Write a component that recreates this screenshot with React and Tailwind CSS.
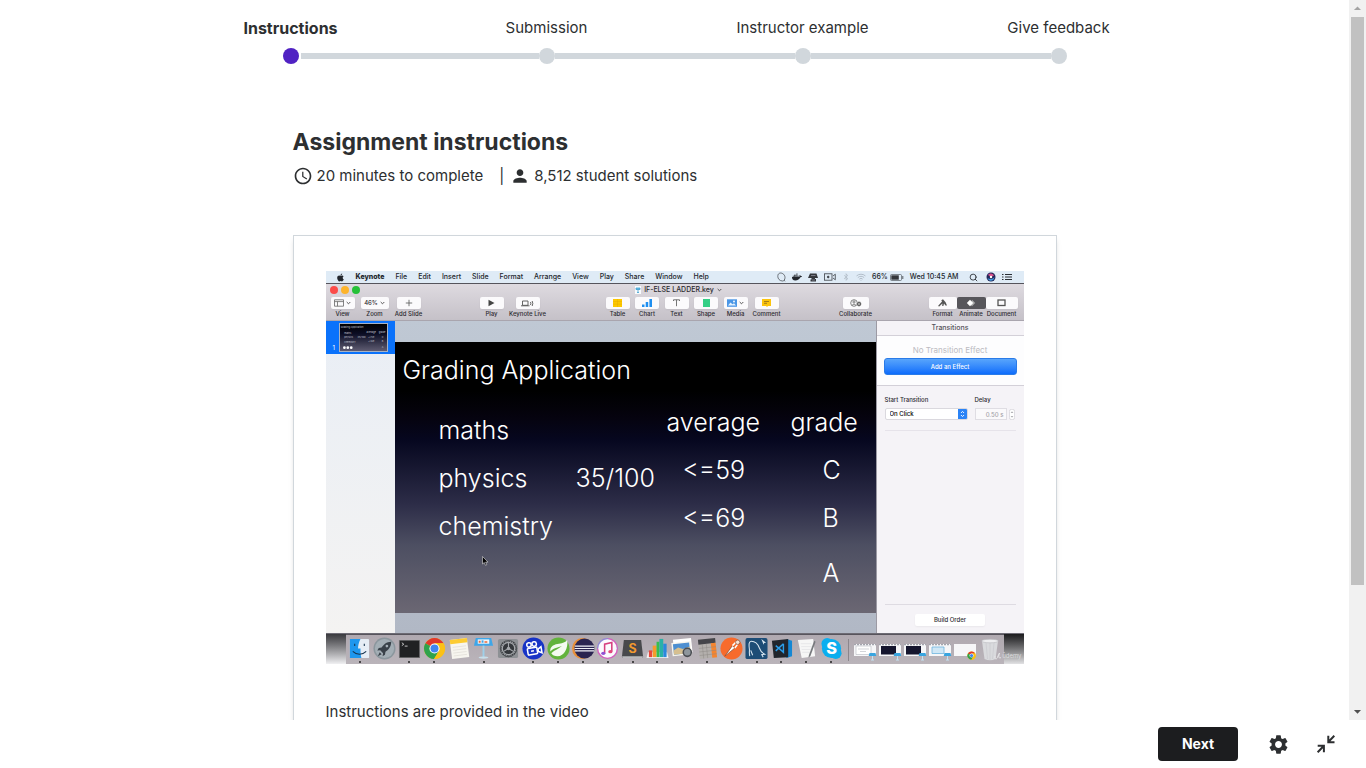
import React from "react";
import { MdAccessTime, MdPerson, MdSettings, MdArrowDropUp, MdArrowDropDown } from "react-icons/md";
import { FaApple, FaDocker, FaBluetoothB } from "react-icons/fa";
import { Search, Wifi } from "lucide-react";

const steps = ["Instructions", "Submission", "Instructor example", "Give feedback"];

function Stepper() {
  return (
    <ol className="mx-auto grid w-full max-w-[1024px] grid-cols-4 pt-4">
      {steps.map((label, i) => (
        <li key={label} className="flex flex-col items-center gap-2">
          <a
            href="#step"
            aria-current={i === 0 ? "step" : undefined}
            className={i === 0 ? "text-base leading-6 font-bold" : "leading-6"}
          >
            {label}
          </a>
          <div className="flex w-full items-center">
            <span className={i === 0 ? "h-1.5 flex-1" : "h-1.5 flex-1 bg-[#d1d7dc]"} />
            <span className={i === 0 ? "mr-0.5 ml-0.5 size-4 rounded-full bg-[#5022c3]" : "size-4 rounded-full bg-[#d1d7dc]"} />
            <span className={i === 3 ? "h-1.5 flex-1" : "h-1.5 flex-1 bg-[#d1d7dc]"} />
          </div>
        </li>
      ))}
    </ol>
  );
}

const menus = ["File", "Edit", "Insert", "Slide", "Format", "Arrange", "View", "Play", "Share", "Window", "Help"];

function MenuBar() {
  return (
    <div className="flex h-[13px] items-center justify-between border-b border-[#55545c] bg-[#dfebf6] pr-3 pl-2.5 text-[7px] leading-[12px] font-medium text-[#22262c]">
      <div className="flex items-center gap-[11px]">
        <FaApple size={9} />
        <span className="font-extrabold">Keynote</span>
        {menus.map((m) => (
          <span key={m}>{m}</span>
        ))}
      </div>
      <div className="flex items-center gap-1.5">
        <svg width="9" height="10" viewBox="0 0 9 10" fill="none" stroke="#3c4046">
          <path d="M2 1.500C4 0 8 2 8 5.500c0 2-1 3.500-2.500 3.500C2.500 9 .8 6.500.8 4.500.8 3 1.200 2 2 1.500z" strokeWidth=".7" />
          <path d="M7 8l1 1.300" strokeWidth=".7" />
        </svg>
        <FaDocker size={10} />
        <svg width="10" height="9" viewBox="0 0 10 9" fill="#34373c">
          <path d="M2 .5h6.500L10 5H7v1h1v2.500H2.500V6.500h1V5H0z" />
          <path d="M3 2.500h4.500M4 7h3" stroke="#aab" strokeWidth=".6" />
        </svg>
        <svg width="12" height="8" viewBox="0 0 12 8" fill="none" stroke="#3c4046" strokeWidth=".8">
          <rect x=".5" y=".8" width="7.500" height="6.400" />
          <path d="M9 3l2.300-1.800v5.600L9 5" />
          <circle cx="4.200" cy="4" r=".9" fill="#3c4046" />
        </svg>
        <FaBluetoothB size={8} color="#b3bec9" />
        <Wifi size={10} color="#aab5c1" strokeWidth={2} />
        <span className="flex items-center gap-0.5">
          66%
          <svg width="14" height="7" viewBox="0 0 14 7">
            <rect x=".5" y=".5" width="11" height="6" rx="1" fill="none" stroke="#555a62" strokeWidth=".7" />
            <rect x="1.300" y="1.300" width="7.500" height="4.400" fill="#33363b" />
            <path d="M12.800 2v3" stroke="#555a62" />
          </svg>
        </span>
        <span>Wed 10:45 AM</span>
        <Search size={9} strokeWidth={2.2} className="ml-1" />
        <svg width="10" height="10" viewBox="0 0 10 10" className="ml-0.5">
          <circle cx="5" cy="5" r="4.500" fill="#24285a" />
          <path d="M2 3c2-2.500 5-1.500 6 .5L5 5z" fill="#d5508b" />
          <path d="M1.500 6c2 1.500 5 1.500 7-1C8 8 6 9 4.500 8.800 3 8.500 2 7.500 1.500 6z" fill="#3f9be0" />
          <circle cx="5" cy="5" r="1.200" fill="#fff" />
        </svg>
        <svg width="10" height="8" viewBox="0 0 10 8" stroke="#2a2d33" strokeWidth="1">
          <path d="M0 1.500h1.500M3 1.500h7M0 4h1.500M3 4h7M0 6.500h1.500M3 6.500h7" />
        </svg>
      </div>
    </div>
  );
}

function Tool({ label, cell, btn, children, dark }) {
  return (
    <div className={"flex flex-col items-center " + cell}>
      <button
        aria-label={label}
        className={
          "flex h-3 shrink-0 items-center justify-center gap-0.5 rounded-[2px] text-[6px] leading-3 " +
          btn +
          (dark ? " bg-[#57565b]" : " bg-[#fbfafc] shadow-xs")
        }
      >
        {children}
      </button>
      <span className="text-[6px] leading-[10px] font-medium whitespace-nowrap">{label}</span>
    </div>
  );
}

const Chevron = () => (
  <svg width="5" height="4" viewBox="0 0 5 4" fill="none" stroke="#444" strokeWidth=".9">
    <path d="M.7 1l1.800 1.800L4.300 1" />
  </svg>
);

function ToolBar() {
  return (
    <div className="border-b border-[#a9a5ae] bg-linear-to-b from-[#dedae0] to-[#c5c1c8] text-[#2c2b30]">
      <div className="grid h-[13px] grid-cols-[1fr_auto_1fr] items-center pb-px pl-1">
        <div className="flex gap-[3px]">
          <span className="size-2 rounded-full bg-[#fb4b49]" />
          <span className="size-2 rounded-full bg-[#fdb42c]" />
          <span className="size-2 rounded-full bg-[#25c138]" />
        </div>
        <div className="flex items-center gap-[3px] pl-1 text-[7px] leading-3 font-medium">
          <svg width="6" height="8" viewBox="0 0 6 8">
            <rect width="6" height="8" fill="#f8fbfd" />
            <path d="M1 2h4v1.500H1zM3 3.500v3M2 6.500h2" stroke="#3d9fd0" strokeWidth=".8" fill="#6bc0e4" />
          </svg>
          IF-ELSE LADDER.key
          <Chevron />
        </div>
      </div>
      <div className="flex h-[23px] justify-between pr-1.5 pl-[3px]">
        <div className="flex">
          <Tool label="View" cell="w-7" btn="w-6">
            <svg width="10" height="8" viewBox="0 0 10 8" fill="none" stroke="#666" strokeWidth=".8">
              <path d="M.5.8h9v6.400h-9zM.5 2.600h9M3.500 2.600v4.600" />
            </svg>
            <Chevron />
          </Tool>
          <Tool label="Zoom" cell="w-9" btn="w-7">
            <span className="font-medium">46%</span>
            <Chevron />
          </Tool>
          <Tool label="Add Slide" cell="w-8" btn="w-6">
            <svg width="8" height="8" viewBox="0 0 8 8" stroke="#555" strokeWidth=".8">
              <path d="M4 .8v6.400M.8 4h6.400" />
            </svg>
          </Tool>
        </div>
        <div className="flex">
          <Tool label="Play" cell="w-7" btn="w-6">
            <svg width="7" height="8" viewBox="0 0 7 8" fill="#444">
              <path d="M.5.800L6.500 4 .5 7.200z" />
            </svg>
          </Tool>
          <Tool label="Keynote Live" cell="w-11" btn="w-6">
            <svg width="13" height="7" viewBox="0 0 13 7" fill="none" stroke="#555" strokeWidth=".9">
              <path d="M1.500 1h5.500v4.300H1.500zM0 5.800h8.500M9.500 2q.8 1.500 0 3M11.200 1q1.200 2.500 0 5" />
            </svg>
          </Tool>
        </div>
        <div className="flex">
          <Tool label="Table" cell="w-[30px]" btn="w-6">
            <svg width="9" height="8" viewBox="0 0 9 8">
              <rect width="9" height="8" fill="#fcc800" />
              <path d="M0 2.500h9M0 5.200h9M4.500 0v8" stroke="#e2a600" strokeWidth=".4" />
            </svg>
          </Tool>
          <Tool label="Chart" cell="w-[29px]" btn="w-6">
            <svg width="10" height="8" viewBox="0 0 10 8" fill="#1e8ff0">
              <path d="M0 5.500h2.500V8H0zM3.700 3h2.500v5H3.700zM7.400 0h2.600v8H7.400z" />
            </svg>
          </Tool>
          <Tool label="Text" cell="w-[30px]" btn="w-6">
            <svg width="7" height="8" viewBox="0 0 7 8" fill="none" stroke="#666" strokeWidth=".9">
              <path d="M.5 2V.8h6V2M3.500.800v6.400" />
            </svg>
          </Tool>
          <Tool label="Shape" cell="w-[29px]" btn="w-6">
            <span className="h-2 w-[7px] bg-[#35cf86]" />
          </Tool>
          <Tool label="Media" cell="w-[30px]" btn="w-6">
            <svg width="10" height="8" viewBox="0 0 10 8">
              <rect width="10" height="7.500" y=".3" fill="#4a96e6" />
              <path d="M1 6.500l2.500-3 2 1.800 1.500-1 2 2.200z" fill="#e4f1fd" />
              <circle cx="7" cy="2.500" r=".9" fill="#fff" />
            </svg>
            <Chevron />
          </Tool>
          <Tool label="Comment" cell="w-8" btn="w-6">
            <svg width="9" height="8" viewBox="0 0 9 8">
              <path d="M0 0h9v7H6L5 8 4 7H0z" fill="#fcc40c" />
              <path d="M2 2.500h5M2 4.300h3" stroke="#99761c" strokeWidth=".9" />
            </svg>
          </Tool>
        </div>
        <Tool label="Collaborate" cell="w-10" btn="w-[26px]">
          <svg width="12" height="8" viewBox="0 0 12 8" fill="none" stroke="#666" strokeWidth=".8">
            <circle cx="4" cy="4" r="3.300" />
            <circle cx="4" cy="3" r="1.100" />
            <path d="M2 6.300q2-2.600 4 0" />
            <circle cx="9" cy="5" r="2.400" fill="#444" stroke="#fff" strokeWidth=".5" />
            <path d="M9 3.800v2.400M7.800 5h2.400" stroke="#fff" strokeWidth=".6" />
          </svg>
        </Tool>
        <div className="flex">
          <Tool label="Format" cell="w-7" btn="w-7">
            <svg width="9" height="8" viewBox="0 0 9 8" fill="#555">
              <path d="M0 7l4-4.500L3.300 1.200 5 .2l2.600 3L9 6.500H7.500L6 4.500 5.400 7H4.200l.2-2.500L1.200 7.500z" />
            </svg>
          </Tool>
          <Tool label="Animate" cell="w-[29px]" btn="w-[29px]" dark>
            <svg width="10" height="8" viewBox="0 0 10 8">
              <path d="M6 .8L9.200 4 6 7.200 4.800 6z" fill="#aaa" />
              <path d="M4 .8L7.200 4 4 7.200.8 4z" fill="#fff" />
            </svg>
          </Tool>
          <Tool label="Document" cell="w-8" btn="w-8">
            <svg width="9" height="8" viewBox="0 0 9 8" fill="none" stroke="#555" strokeWidth="1.300">
              <rect x="1" y="1" width="7" height="5.500" />
            </svg>
          </Tool>
        </div>
      </div>
    </div>
  );
}

function SlideThumb() {
  return (
    <svg width="49" height="29" viewBox="0 0 481 271" preserveAspectRatio="none" className="border border-[#a8b3c4]">
      <defs>
        <linearGradient id="thumb" x1="0" y1="0" x2="0" y2="1">
          <stop offset="0" stopColor="#000" />
          <stop offset=".36" stopColor="#0b0d24" />
          <stop offset="1" stopColor="#5f5c72" />
        </linearGradient>
      </defs>
      <rect width="481" height="271" fill="url(#thumb)" />
      <g fill="#c3c6d4" fontFamily="Inter, sans-serif" fontSize="25">
        <text x="8" y="37">Grading Application</text>
        <text x="44" y="97">maths</text>
        <text x="44" y="145">physics</text>
        <text x="180" y="145">35/100</text>
        <text x="44" y="193">chemistry</text>
        <text x="272" y="89">average</text>
        <text x="396" y="89">grade</text>
        <text x="288" y="137">&lt;=59</text>
        <text x="288" y="185">&lt;=69</text>
        <text x="428" y="137">C</text>
        <text x="428" y="185">B</text>
        <text x="428" y="240">A</text>
      </g>
      <g fill="#fff">
        <circle cx="45" cy="238" r="14" />
        <circle cx="80" cy="238" r="14" />
        <circle cx="115" cy="238" r="14" />
      </g>
    </svg>
  );
}

function Slide() {
  return (
    <div className="relative h-[271px] bg-[linear-gradient(#000_18%,#05030f_28%,#06071f_36%,#2d2d48_60%,#4d4f62_75%,#6b6773_100%)] text-[25px] leading-8 font-light whitespace-nowrap text-white">
      <p className="absolute top-3 left-2">Grading Application</p>
      <p className="absolute top-[72px] left-11">maths</p>
      <p className="absolute top-[120px] left-11">physics</p>
      <p className="absolute top-[168px] left-11">chemistry</p>
      <p className="absolute top-[120px] left-[181px]">35/100</p>
      <p className="absolute top-[64px] left-[272px]">average</p>
      <p className="absolute top-[112px] left-[288px]">&lt;=59</p>
      <p className="absolute top-[160px] left-[288px]">&lt;=69</p>
      <p className="absolute top-[64px] left-[396px]">grade</p>
      <p className="absolute top-[112px] left-[428px]">C</p>
      <p className="absolute top-[160px] left-[428px]">B</p>
      <p className="absolute top-[215px] left-[428px]">A</p>
      <svg className="absolute top-[214px] left-[87px]" width="7" height="10" viewBox="0 0 7 10">
        <path d="M.5.5v7.500l1.800-1.500L3.500 9.300l1.300-.6-1.200-2.600H6z" fill="#000" stroke="#ddd" strokeWidth=".6" />
      </svg>
    </div>
  );
}

function Inspector() {
  return (
    <div className="flex w-[148px] flex-col border-l border-[#9c9aa4] bg-[#f5f3f7] text-[6px] font-medium text-[#2b2b30]">
      <p className="h-[15px] border-b border-[#d3d0d8] text-center text-[7px] leading-[14px] text-[#55545a]">Transitions</p>
      <div className="flex h-[50px] flex-col justify-end border-b border-[#d3d0d8] bg-[#fdfdfe] px-[7px] pb-[10px] text-center">
        <p className="text-[8px] leading-4 font-normal text-[#bcbbc1]">No Transition Effect</p>
        <button className="h-[17px] rounded-[3px] border border-[#2a7be8] bg-linear-to-b from-[#58a5fb] to-[#0c6cfb] text-[6px] leading-[15px] text-white">
          Add an Effect
        </button>
      </div>
      <div className="mx-2 grid grid-cols-[83px_auto] gap-x-[7px] border-b border-[#e6e3ea] pt-[9px] pb-[10px]">
        <label htmlFor="start" className="leading-[10px]">Start Transition</label>
        <label htmlFor="delay" className="leading-[10px]">Delay</label>
        <div className="mt-[3px] flex h-3 overflow-hidden rounded-[2px] border border-[#dad8de] bg-white">
          <select id="start" className="flex-1 appearance-none pl-1 text-[6px] leading-[10px] font-medium text-black">
            <option>On Click</option>
          </select>
          <span className="flex w-[9px] items-center justify-center bg-[#2b83f6]">
            <svg width="5" height="8" viewBox="0 0 5 8" fill="none" stroke="#fff" strokeWidth=".9">
              <path d="M1 3l1.500-1.600L4 3M1 5l1.500 1.600L4 5" />
            </svg>
          </span>
        </div>
        <div className="mt-[3px] flex items-center gap-0.5">
          <input
            id="delay"
            defaultValue="0.50 s"
            className="h-3 w-8 border border-[#dfdde3] bg-[#faf9fb] pr-0.5 text-right text-[6px] leading-[10px] text-[#a3a2a8]"
          />
          <svg width="6" height="11" viewBox="0 0 6 11" fill="none" stroke="#8d8c92" strokeWidth=".7">
            <rect x=".4" y=".4" width="5.200" height="10.200" rx="2" stroke="#cfcdd4" fill="#fff" />
            <path d="M2 4l1-1.200L4 4M2 7l1 1.200L4 7" />
          </svg>
        </div>
      </div>
      <div className="mx-2 mt-auto mb-[7px] flex justify-center border-t border-[#dedbe2] pt-[9px]">
        <button className="h-3 w-[70px] rounded-[2px] bg-white text-[6px] leading-3 shadow-xs">Build Order</button>
      </div>
    </div>
  );
}

const ChromeMark = () => (
  <>
    <circle cx="12" cy="12" r="11" fill="#fbc116" />
    <path d="M12 12L2.500 6.500A11 11 0 0 1 21.500 6.500H12z" fill="#e0382c" />
    <path d="M12 12L2.500 6.500A11 11 0 0 0 11.500 23l5-8.500z" fill="#2fa24c" />
    <path d="M12 6.500h9.500A11 11 0 0 1 11.500 23l5.200-8.500z" fill="#fbc116" />
    <circle cx="12" cy="12" r="5.300" fill="#fff" />
    <circle cx="12" cy="12" r="4.200" fill="#4285f0" />
  </>
);

const dockApps = [
  { name: "Finder", dot: true, art: (
    <>
      <rect x="2" y="2" width="20" height="20" rx="1" fill="#e6edf5" />
      <path d="M2 2h11c-2 4-2.500 7-2.500 10H13c0 4 .3 7 1 10H2z" fill="#1f97ee" />
      <path d="M7 7v2.500M17 7v2.500M5 15c4 4 10 4 14 0" fill="none" stroke="#16344f" strokeWidth="1.100" />
    </>) },
  { name: "Launchpad", art: (
    <>
      <circle cx="12" cy="12" r="11.500" fill="#8b969d" />
      <circle cx="12" cy="12" r="10" fill="#a3aeb5" />
      <path d="M19 5c-5 0-8 3-10 6l-3 .5L4.500 14l3-.3L10.500 17l-.5 3 2.500-1.500.5-3c3-2 6-5 6-10.500zM7 16l-2 4 4-2z" fill="#394149" />
      <circle cx="14.500" cy="9.500" r="1.400" fill="#a6b1b8" />
    </>) },
  { name: "Terminal", dot: true, art: (
    <>
      <rect x="1" y="3" width="22" height="19" rx="1" fill="#6b6b6d" />
      <rect x="2" y="4" width="20" height="17" fill="#202123" />
      <path d="M4 6l2 1.500L4 9M7 9.500h3" stroke="#ddd" fill="none" strokeWidth=".9" />
    </>) },
  { name: "Chrome", dot: true, art: <ChromeMark /> },
  { name: "Notes", art: (
    <g transform="rotate(-7 12 12)">
      <rect x="3" y="2" width="18" height="20" fill="#f7f5ef" />
      <rect x="3" y="2" width="18" height="4.500" fill="#fccb32" />
      <path d="M5 10h14M5 13h14M5 16h14M5 19h14" stroke="#dbd8d0" strokeWidth=".6" />
    </g>) },
  { name: "Keynote", dot: true, art: (
    <>
      <path d="M4 1h16l2 8H2z" fill="#3ea6e8" />
      <path d="M6 2.500h12v4.500H6z" fill="#f0f6fa" />
      <path d="M7 6V4h2v2M13 6V4.500h3V6" fill="#e96a3a" />
      <path d="M10 6V3.500h2V6" fill="#3ea6e8" />
      <path d="M11 9h2v12h-2z" fill="#9fd0ea" />
      <ellipse cx="12" cy="21.500" rx="5" ry="1.200" fill="#c8dfeb" />
    </>) },
  { name: "System Preferences", art: (
    <>
      <rect x="1" y="2" width="21" height="20" rx="2" fill="#8d9094" />
      <circle cx="12" cy="12" r="9" fill="#34373b" />
      <circle cx="12" cy="12" r="6.500" fill="none" stroke="#a6a9ad" strokeWidth="1.300" />
      <circle cx="12" cy="12" r="7.700" fill="none" stroke="#a6a9ad" strokeWidth="1.200" strokeDasharray="1 1" />
      <path d="M12 12V6M12 12l5.200 3M12 12l-5.200 3" stroke="#a6a9ad" strokeWidth="1.200" />
      <circle cx="12" cy="12" r="1.800" fill="#a6a9ad" />
    </>) },
  { name: "Camera", dot: true, art: (
    <>
      <circle cx="12" cy="12" r="11.500" fill="#1733c6" />
      <g transform="rotate(-10 12 12)" fill="none" stroke="#fff" strokeWidth="1.600">
        <circle cx="8" cy="7.500" r="2.300" />
        <circle cx="13.500" cy="7.500" r="2.300" />
        <rect x="5.500" y="11" width="10" height="7" rx="1" />
        <path d="M16.500 13.500l3.500-2v6.500l-3.500-2z" />
        <path d="M9 14.500h3" />
      </g>
    </>) },
  { name: "Spring", dot: true, art: (
    <>
      <circle cx="12" cy="12" r="11.500" fill="#62b33c" />
      <path d="M21 3c-2 3-6 3.500-10 4.200C6 8 3 10.500 3.500 15c3.500-3.500 8-4 12-5.500C12.500 12.500 8 13.500 4.500 17c1 2 3.500 3 6.500 3C18 20 22.500 11 21 3z" fill="#f4faf0" />
    </>) },
  { name: "Eclipse", dot: true, art: (
    <>
      <circle cx="11" cy="12" r="11" fill="#e8903a" />
      <circle cx="13" cy="12" r="10.500" fill="#2a2450" />
      <path d="M3 9.500h20M2.700 12h20.600M3 14.500h20" stroke="#f1f1f7" strokeWidth="1.200" />
    </>) },
  { name: "iTunes", dot: true, art: (
    <>
      <circle cx="12" cy="12" r="11" fill="#d35fbd" />
      <path d="M12 1a11 11 0 0 0-11 11h22" fill="#5ea9e8" opacity=".6" />
      <circle cx="12" cy="12" r="9.600" fill="#fbfafd" />
      <path d="M9 17V7.500l7.500-1.800V15" fill="none" stroke="#d6407f" strokeWidth="1.600" />
      <ellipse cx="7.600" cy="17" rx="2.200" ry="1.700" fill="#8e52d4" />
      <ellipse cx="15" cy="15.300" rx="2.200" ry="1.700" fill="#e2477c" />
    </>) },
  { name: "Sublime Text", dot: true, art: (
    <>
      <path d="M3 3h18l2 17-1 2H2l-1-2z" fill="#48494c" />
      <path d="M1 20h22l-1 2H2z" fill="#b9babd" />
      <text x="12" y="16.500" textAnchor="middle" fontSize="13" fontWeight="700" fill="#f29a2e" fontFamily="Inter, sans-serif">S</text>
    </>) },
  { name: "Numbers", dot: true, art: (
    <>
      <path d="M2 16h20l1.500 6H.5z" fill="#f1f1f3" />
      <path d="M3 14h3.500v7H3z" fill="#e8483d" />
      <path d="M7 9h4v12H7z" fill="#f59c2c" />
      <path d="M11 5h3v16h-3z" fill="#36bd4f" />
      <path d="M14 2h4v19h-4z" fill="#29b1a6" />
      <path d="M18 7h3.500v14H18z" fill="#2a88dd" />
    </>) },
  { name: "Preview", dot: true, art: (
    <>
      <g transform="rotate(-6 12 12)">
        <rect x="3" y="2" width="19" height="15" fill="#fff" />
        <rect x="1" y="5" width="20" height="14" fill="#f7f5ee" />
        <rect x="2.500" y="6.500" width="17" height="11" fill="#4d8fd1" />
        <path d="M2.500 13l5-2.500 5 2 7-1.500v6.500h-17z" fill="#d6bf90" />
      </g>
      <circle cx="17" cy="16" r="4.200" fill="#8e969c" stroke="#4a4d52" strokeWidth="1.600" />
    </>) },
  { name: "Calculator", dot: true, art: (
    <g transform="rotate(-6 12 12)">
      <rect x="3" y="2" width="18" height="20" fill="#b3afac" />
      <rect x="3" y="2" width="18" height="5" fill="#45454a" />
      <rect x="16" y="7" width="5" height="15" fill="#f5852f" />
      <path d="M3 11h18M3 14.700h18M3 18.400h18M7 7v15M11.200 7v15" stroke="#8d8985" strokeWidth=".5" />
    </g>) },
  { name: "Postman", dot: true, art: (
    <>
      <circle cx="12" cy="12" r="11.500" fill="#f76b2c" />
      <path d="M5 20l8-11 2.500 2.500z" fill="#fff" stroke="#7e4a32" strokeWidth=".7" />
      <path d="M13 9l4-4M15.500 11.500l3-4" stroke="#fff" strokeWidth="1.500" />
      <circle cx="18.500" cy="5.500" r="2.300" fill="#f7e3d8" stroke="#7e4a32" strokeWidth=".7" />
    </>) },
  { name: "MySQL Workbench", dot: true, art: (
    <>
      <rect x=".5" y="1" width="23" height="22" rx="2" fill="#1d4d76" />
      <path d="M5 20c-1-4 0-5-.5-8C4 8 4 4.500 6.500 4.500c4 0 7 3 8.500 7 1 3 2.500 5 5.500 6.500l-3 .5 1.500 2.500M6 14l2 5" fill="none" stroke="#d8e6f0" strokeWidth="1.100" />
      <path d="M17 2l5 4-2 .2-.5 2z" fill="#d8e6f0" />
    </>) },
  { name: "Visual Studio Code", dot: true, art: (
    <>
      <path d="M17 2l6 2v16l-6 2z" fill="#1487d4" />
      <path d="M2 4l17-2v19L4 22z" fill="#20252c" />
      <path d="M14 7v9l-6-5.500M14 7l-8 7.500M14 16L6 9" stroke="#2b9eea" strokeWidth="1.500" fill="none" />
    </>) },
  { name: "TextEdit", dot: true, art: (
    <>
      <path d="M3 3l16-1 2 18-14 2z" fill="#f6f6f6" />
      <path d="M6 7h11M6.500 10h11M7 13h10M7.500 16h8" stroke="#dcdcdf" strokeWidth=".6" />
      <path d="M20 4l1.500 1-5.500 15-2 1.500.5-2.500z" fill="#77797d" />
    </>) },
  { name: "Skype", dot: true, art: (
    <>
      <circle cx="12" cy="12" r="10" fill="#0aaeef" />
      <circle cx="7.500" cy="7" r="6" fill="#0aaeef" />
      <circle cx="16.500" cy="17" r="6" fill="#0aaeef" />
      <text x="12" y="18" textAnchor="middle" fontSize="17" fontWeight="800" fill="#fff" fontFamily="Inter, sans-serif">S</text>
    </>) },
];

const dockWindows = ["light", "dark", "dark", "blue", "chrome"];

function DockWindow({ kind }) {
  return (
    <svg width="23" height="22" viewBox="0 0 23 22">
      <rect x="0" y="5" width="22" height="12" fill="#f6f6f8" />
      {kind !== "chrome" && <path d="M0 5.700h22" stroke="#8f929c" strokeWidth="1" strokeDasharray="2 1" />}
      {kind === "dark" && <path d="M2 7h15v8.500H2z" fill="#15152e" />}
      {kind === "light" && <path d="M2 7h15v8.500H2zM4 10h11M6 12.500h6" fill="#fff" stroke="#b5b8bf" strokeWidth=".6" />}
      {kind === "blue" && <path d="M3 8h12v6.500H3z" fill="#cfe7f6" stroke="#6fb5de" strokeWidth=".8" />}
      {kind === "chrome" ? (
        <g transform="translate(13 12) scale(.38)">
          <ChromeMark />
        </g>
      ) : (
        <g>
          <path d="M15.500 14h6l.8 3h-7.600z" fill="#39a4df" />
          <path d="M18.500 17v4M17 21h3" stroke="#c3e2f2" strokeWidth="1" />
        </g>
      )}
    </svg>
  );
}

function Dock() {
  return (
    <div className="flex h-[30px]">
      <div className="w-5 bg-linear-to-b from-[#3a3a3e] to-[#f0f0f2]" />
      <div className="flex flex-1 items-center justify-between border-t border-[#57545c] bg-linear-to-b from-[#b0a9b0] to-[#bab4ba] pr-px pl-0.5">
        <div className="grid w-[496px] grid-cols-20">
          {dockApps.map((app) => (
            <div key={app.name} className="flex flex-col items-center gap-px">
              <svg width="23" height="23" viewBox="0 0 24 24" role="img" aria-label={app.name}>
                {app.art}
              </svg>
              <span className={app.dot ? "size-0.5 rounded-full bg-[#222]" : "size-0.5"} />
            </div>
          ))}
        </div>
        <span className="h-[22px] w-px bg-[#8b868c]" />
        <div className="grid w-[150px] grid-cols-6 items-center justify-items-center">
          {dockWindows.map((k, i) => (
            <DockWindow key={i} kind={k} />
          ))}
          <svg width="20" height="24" viewBox="0 0 20 24">
            <path d="M2 3l2.500 18q5.500 2.500 11 0L18 3z" fill="#d9dadd" />
            <path d="M6 5l1.500 16M10 5v17M14 5l-1.500 16" stroke="#cbccd0" strokeWidth=".8" />
            <ellipse cx="10" cy="3" rx="8.300" ry="1.800" fill="#eeeef0" stroke="#b8b9be" strokeWidth=".6" />
          </svg>
        </div>
      </div>
      <div className="relative w-5 bg-linear-to-b from-[#1c1c1e] to-[#e2e2e4]">
        <span className="absolute right-0.5 bottom-0.5 flex items-center text-[6px] leading-3 text-[#dcdcde]">
          <svg width="8" height="8" viewBox="0 0 8 8" fill="none" stroke="#e6e6e8" strokeWidth="1">
            <path d="M1 4c-.5 4 2 4 3 0l1.500-3C4 5 5 7 7 5.500" />
          </svg>
          ûdemy
        </span>
      </div>
    </div>
  );
}

function VideoFrame() {
  return (
    <figure className="w-full overflow-hidden font-[Inter,sans-serif]">
      <MenuBar />
      <ToolBar />
      <div className="flex h-[313px] border-b border-[#6d6b74]">
        <div className="w-[69px] bg-linear-to-b from-[#e9eef5] to-[#f4f3f2]">
          <div className="flex h-[33px] items-end justify-between bg-[#0a72fb] px-[7px] pb-0.5 text-[6px] leading-2 text-white">
            1
            <SlideThumb />
          </div>
        </div>
        <div className="flex min-w-0 flex-1 flex-col justify-center bg-linear-to-b from-[#bfc8d4] to-[#b1b8c5]">
          <Slide />
        </div>
        <Inspector />
      </div>
      <Dock />
    </figure>
  );
}

function ScrollTrack() {
  return (
    <div aria-hidden="true" className="flex w-[17px] shrink-0 flex-col items-center bg-[#f1f1f1]">
      <MdArrowDropUp size={17} color="#a3a3a3" />
      <div className="h-[568px] w-[13px] bg-[#c1c1c1]" />
      <MdArrowDropDown size={17} color="#505050" className="mt-auto" />
    </div>
  );
}

export default function App() {
  return (
    <div className="flex h-screen flex-col bg-white font-[Inter,sans-serif] text-[15px] text-[#2d2f31]">
      <div className="flex min-h-0 flex-1">
        <main className="min-w-0 flex-1 overflow-y-auto [scrollbar-width:none]">
          <Stepper />
          <section className="mx-auto w-full max-w-[764px] pt-[62px] pb-16">
            <h1 className="text-[23px] leading-8 font-bold">Assignment instructions</h1>
            <div className="mt-1.5 flex items-center leading-6">
              <MdAccessTime size={20} className="mr-1" />
              <span>20 minutes to complete</span>
              <span className="mr-1.5 ml-4">|</span>
              <MdPerson size={20} className="mr-1" />
              <span>8,512 student solutions</span>
            </div>
            <article className="mt-[47px] border border-[#d1d7dc] px-8 pt-[35px] pb-8 shadow-md">
              <VideoFrame />
              <p className="mt-9 leading-6">Instructions are provided in the video</p>
            </article>
          </section>
        </main>
        <ScrollTrack />
      </div>
      <footer className="flex h-12 shrink-0 items-center justify-end pr-4">
        <button className="mr-4 h-[34px] w-20 rounded bg-[#1c1d1f] text-sm font-bold text-white">Next</button>
        <button aria-label="Settings" className="flex size-12 items-center justify-center">
          <MdSettings size={23} />
        </button>
        <button aria-label="Exit full screen" className="flex size-12 items-center justify-center">
          <svg width="18" height="18" viewBox="0 0 18 18" fill="none" stroke="#2d2f31" strokeWidth="2">
            <path d="M11.300.8v6.400h6.200M17.300.800L11.300 7M.7 10.800h6.200v6.500M.7 17.300L6.900 10.800" />
          </svg>
        </button>
      </footer>
    </div>
  );
}
